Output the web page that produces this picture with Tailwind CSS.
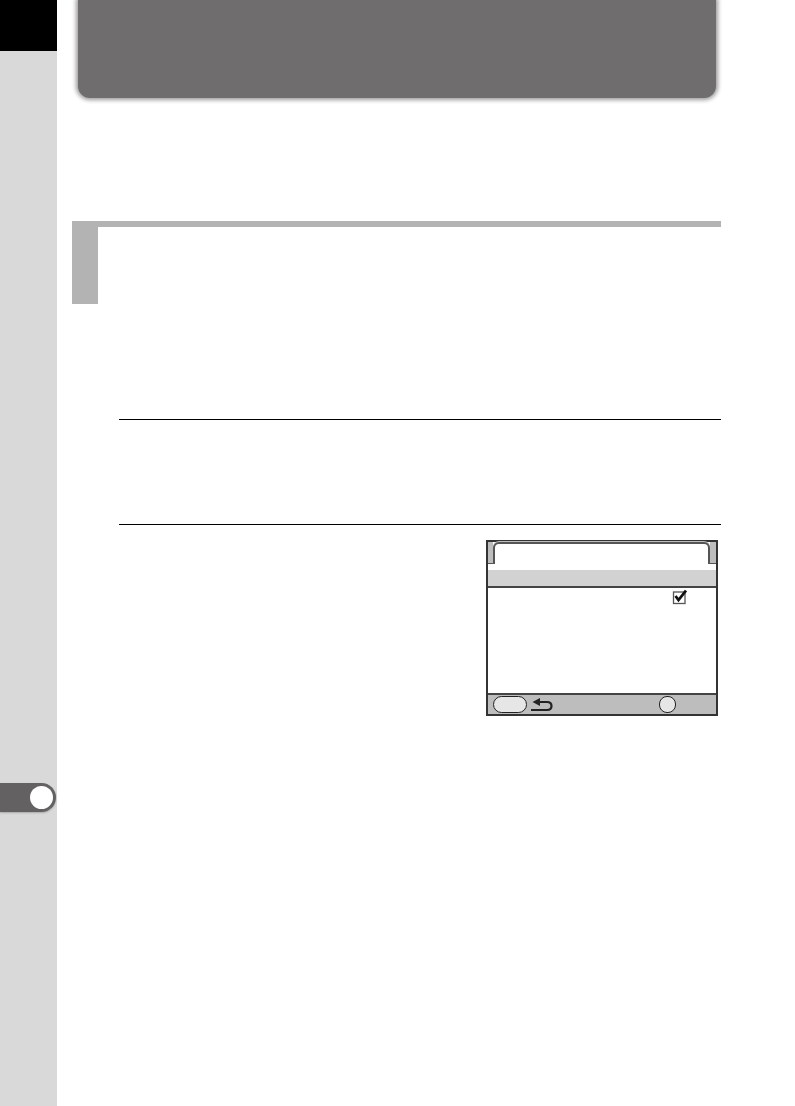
<!DOCTYPE html>
<html lang="en">
<head>
    <meta charset="UTF-8">
    <title>Manual page</title>
    <script src="https://cdn.jsdelivr.net/npm/@tailwindcss/browser@4"></script>
</head>
<body class="bg-white">
<div class="flex h-[1106px] w-[795px] overflow-hidden">

    <!-- side tab -->
    <aside class="w-[57px] h-full bg-[#d9d9d9] flex flex-col shrink-0">
        <div class="h-[51px] bg-black"></div>
        <div class="mt-[732px] h-[29px] w-[56px] bg-[#636161] rounded-r-full flex items-center justify-end pr-[3px] shadow-[0_1px_2px_#a8a8a8]">
            <div class="w-[23px] h-[23px] rounded-full bg-white"></div>
        </div>
    </aside>

    <main class="flex-1 pl-[15px]">
        <!-- title banner -->
        <div class="ml-[6px] w-[638px] h-[98px] bg-[#6f6d6d] rounded-b-[12px] shadow-[0_0_4px_2px_#9c9a9a]"></div>

        <!-- section heading -->
        <div class="mt-[123px] w-[649px] h-[83px] flex border-t-[6px] border-[#b3b3b3]">
            <div class="w-[26px] bg-[#b3b3b3]"></div>
        </div>

        <div class="ml-[47px] mt-[115px] w-[602px]">
            <div class="h-[105px] border-t border-black"></div>
            <div class="border-t border-black pt-[15px] flex justify-end pr-[3px]">

                <!-- camera screen -->
                <div class="w-[232px] h-[176px] border-2 border-[#333] flex flex-col">
                    <div class="h-[22px] flex shrink-0">
                        <div class="w-[5px] bg-[#bdbdbd] border-b border-[#555]"></div>
                        <div class="flex-1 bg-white border-t-2 border-x-2 border-[#555] rounded-t-[6px] shadow-[0_-1px_0_#bdbdbd]"></div>
                        <div class="w-[6px] bg-[#bdbdbd] border-b border-[#555]"></div>
                    </div>
                    <div class="h-[6px] bg-white shrink-0"></div>
                    <div class="h-[16px] bg-[#d2d2d2] shrink-0"></div>
                    <div class="flex-1 border-t-2 border-[#444] bg-white flex justify-end pr-[29px] pt-[1px]">
                        <svg class="w-[16px] h-[16px]" viewBox="0 0 16 16">
                            <rect x="2.5" y="3" width="11.5" height="11.5" fill="white" stroke="#555" stroke-width="1.3"/>
                            <path d="M4.5 7 L7.5 11 L15 1.5" fill="none" stroke="#111" stroke-width="2.8"/>
                        </svg>
                    </div>
                    <div class="h-[19px] bg-[#bdbdbd] border-t-2 border-[#444] box-content flex items-center pl-[5px] shrink-0">
                        <div class="w-[34px] h-[17px] rounded-full bg-[#e6e6e6] border border-[#222]"></div>
                        <svg class="ml-[3px] w-[23px] h-[16px]" viewBox="0 0 23 16">
                            <path d="M8 5 H17 Q21.5 5 21.5 9 Q21.5 13 17 13 H1" fill="none" stroke="#222" stroke-width="2.2"/>
                            <path d="M10 1 L2.5 5 L10 9 Z" fill="#222"/>
                        </svg>
                        <div class="ml-[106px] w-[17px] h-[17px] rounded-[8px] bg-[#e6e6e6] border border-[#222]"></div>
                    </div>
                </div>
            </div>
        </div>
    </main>
</div>
</body>
</html>
